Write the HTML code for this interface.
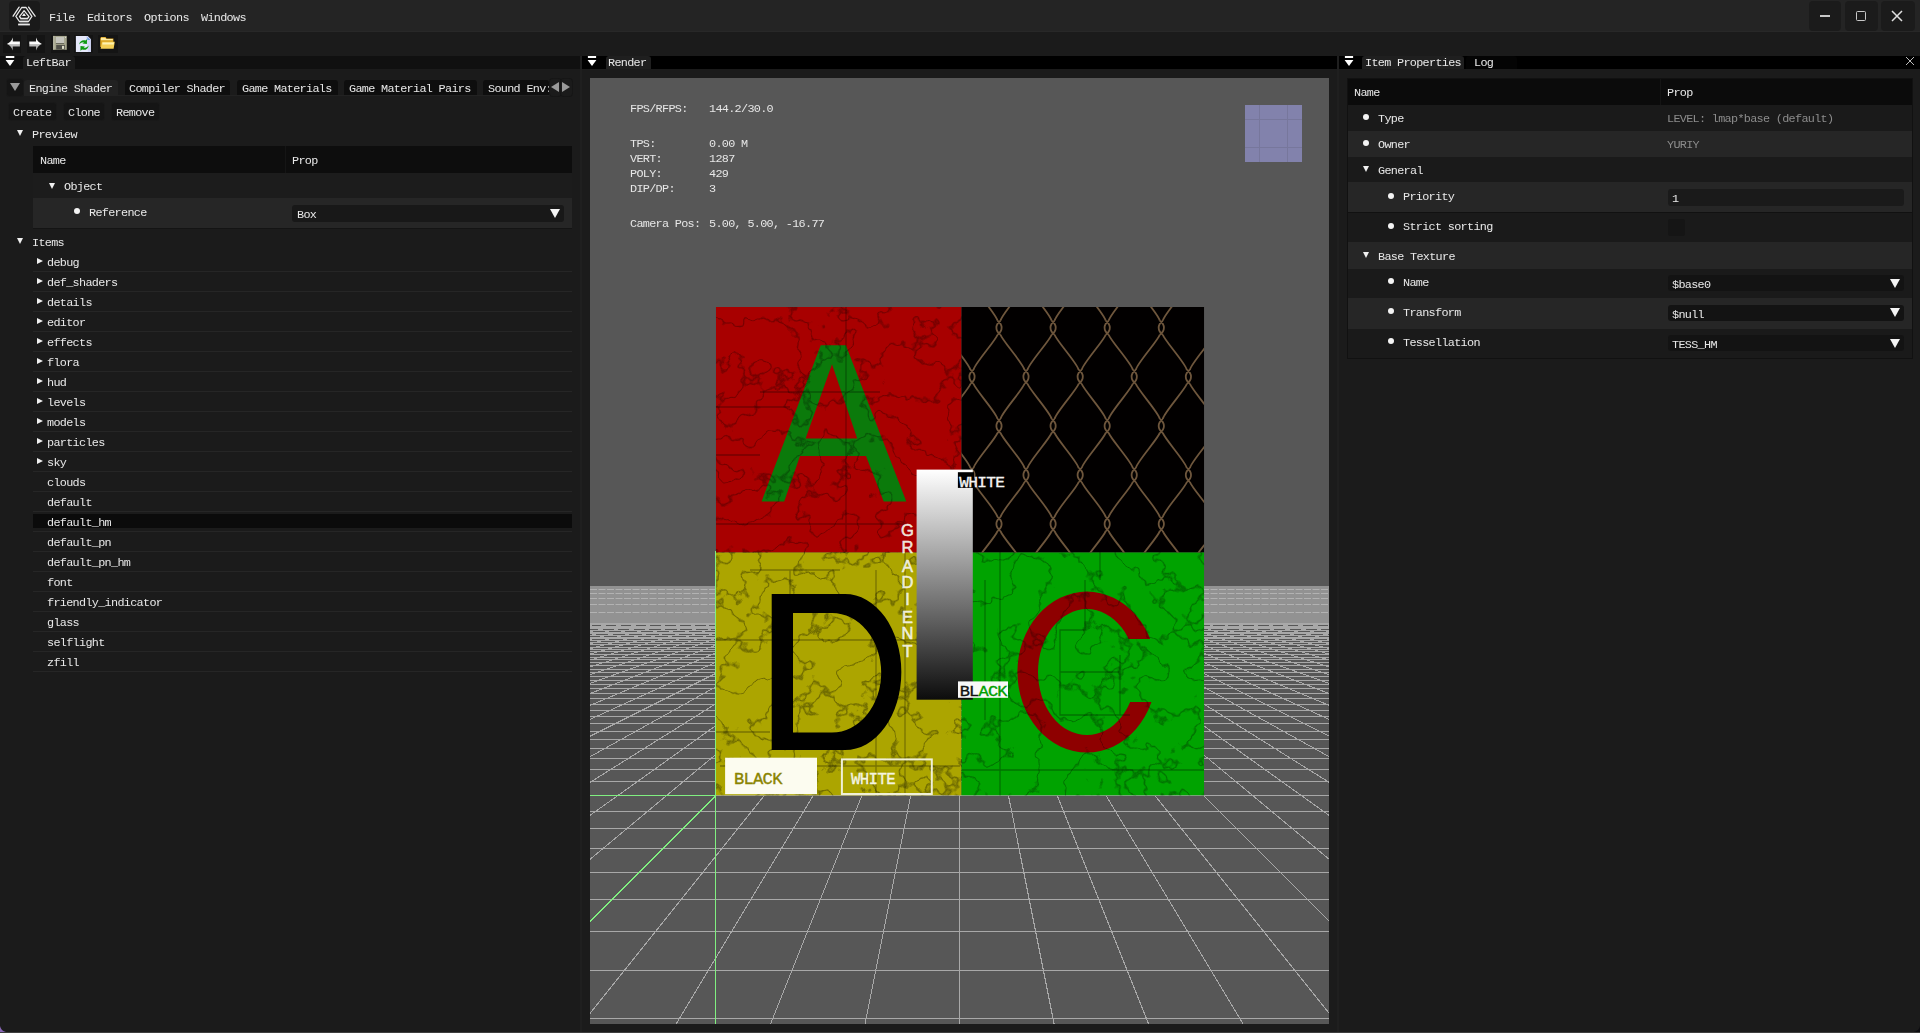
<!DOCTYPE html>
<html><head><meta charset="utf-8">
<style>
*{box-sizing:border-box;margin:0;padding:0}
html,body{width:1920px;height:1033px;overflow:hidden;background:#1b1b1b}
body{position:relative;font-family:"Liberation Mono",monospace;font-size:11.8px;letter-spacing:-0.68px;color:#e8e8e8}
.a{position:absolute}
.t{position:absolute;line-height:14px;white-space:pre;margin-top:1px;will-change:transform}
.sep{position:absolute;left:33px;width:539px;height:1px;background:#262626}
.tri{position:absolute;width:0;height:0;border-left:3.5px solid transparent;border-right:3.5px solid transparent;border-top:6px solid #f0f0f0}
.trir{position:absolute;width:0;height:0;border-top:3.5px solid transparent;border-bottom:3.5px solid transparent;border-left:6px solid #f0f0f0}
.dot{position:absolute;width:6px;height:6px;border-radius:3px;background:#f4f4f4}
.btn{position:absolute;background:#151515;border-radius:3px;box-shadow:0 0 0 1px #191919}
.tab{position:absolute;border-radius:3px 3px 0 0}
</style></head><body>
<!-- ===== title bar ===== -->
<div class="a" style="left:0;top:0;width:1920px;height:31px;background:#242424"></div>
<div class="a" style="left:0;top:31px;width:1920px;height:1px;background:#282828"></div>
<div class="a" style="left:9px;top:1px;width:31px;height:30px;background:#1a1a1a;border-radius:4px"></div>
<svg class="a" style="left:0;top:0" width="50" height="32" viewBox="0 0 50 32">
 <g fill="none" stroke="#e8e8e8" stroke-width="1.3" stroke-linejoin="round" stroke-linecap="round">
  <path d="M13.1,16.2 L19.1,7.1 M28.6,7.1 L35.1,16.2"/>
  <path d="M21.7,7.5 H26.1 L31.9,16.3 L28.5,21.5 H19.4 L15.9,16.3 Z"/>
  <path d="M24.1,10.7 L29,16.6 L27.5,18.5 H20.9 L19.5,16.6 Z"/>
 </g>
 <path d="M20.2,20 H27.8" stroke="#9a9a9a" stroke-width="0.9"/>
 <path d="M20,22.8 H28.2" stroke="#8a8a8a" stroke-width="0.7"/>
 <path d="M24,13 L22,15.9 H26 Z" fill="#f0f0f0"/>
 <rect x="18.1" y="23.6" width="11.8" height="1.8" fill="#e8e8e8"/>
</svg>
<div class="t" style="left:49px;top:10px">File</div>
<div class="t" style="left:87px;top:10px">Editors</div>
<div class="t" style="left:144px;top:10px">Options</div>
<div class="t" style="left:201px;top:10px">Windows</div>
<!-- window buttons -->
<div class="a" style="left:1809px;top:1px;width:32px;height:30px;background:#1b1b1b;border-radius:4px"></div>
<div class="a" style="left:1845px;top:1px;width:33px;height:30px;background:#1b1b1b;border-radius:4px"></div>
<div class="a" style="left:1881px;top:1px;width:34px;height:30px;background:#1b1b1b;border-radius:4px"></div>
<div class="a" style="left:1820px;top:15px;width:10px;height:2px;background:#c8c8c8"></div>
<div class="a" style="left:1856px;top:11px;width:10px;height:10px;border:1.5px solid #c8c8c8;border-radius:1.5px"></div>
<svg class="a" style="left:1891px;top:10px" width="12" height="12" viewBox="0 0 12 12"><path d="M1,1 L11,11 M11,1 L1,11" stroke="#e0e0e0" stroke-width="1.5"/></svg>

<!-- ===== toolbar ===== -->
<div class="a" style="left:0;top:32px;width:1920px;height:24px;background:#1b1b1b"></div>
<div class="a" style="left:3px;top:35px;width:18px;height:18px;background:#141414"></div>
<div class="a" style="left:27px;top:35px;width:18px;height:18px;background:#141414"></div>
<div class="a" style="left:51px;top:35px;width:19px;height:18px;background:#141414"></div>
<div class="a" style="left:74px;top:35px;width:19px;height:18px;background:#141414"></div>
<div class="a" style="left:98px;top:35px;width:20px;height:18px;background:#141414"></div>
<svg class="a" style="left:0;top:32px" width="120" height="24" viewBox="0 0 120 24">
 <defs>
  <linearGradient id="ag" x1="0" y1="0" x2="0" y2="1"><stop offset="0" stop-color="#e8e8e8"/><stop offset="0.5" stop-color="#ffffff"/><stop offset="0.52" stop-color="#c4c4c4"/><stop offset="1" stop-color="#8c8c8c"/></linearGradient>
 </defs>
 <path d="M6.9,12 Q11.2,10.2 12.8,5.6 V9.6 H19.9 V14.6 H12.8 V18.6 Q11.2,13.8 6.9,12 Z" fill="url(#ag)"/>
 <path d="M41.9,12 Q37.6,10.2 36,5.6 V9.6 H29.3 V14.6 H36 V18.6 Q37.6,13.8 41.9,12 Z" fill="url(#ag)"/>
 <!-- floppy -->
 <rect x="53.3" y="3.9" width="13.5" height="13.9" fill="#a4a48c"/>
 <rect x="53.3" y="3.9" width="1" height="13.9" fill="#c8c8b4"/>
 <rect x="55.9" y="4.9" width="8.2" height="6.4" fill="#c4c4bc"/>
 <rect x="55.9" y="11.2" width="8.2" height="0.7" fill="#4c4c44"/>
 <rect x="56.2" y="12.9" width="8.7" height="4.7" fill="#4e4e48"/>
 <rect x="62" y="13.9" width="2.1" height="3" fill="#dedec8"/>
 <rect x="65.2" y="4.8" width="0.9" height="0.9" fill="#fff"/>
 <!-- refresh doc -->
 <path d="M75.9,3.9 H87.6 L90.9,7.3 V19.9 H75.9 Z" fill="#e6e9fb"/>
 <path d="M86,3.9 H87.6 L90.9,7.3 V19.9 H88 Z" fill="#c4ccf4" opacity="0.6"/>
 <path d="M87.3,4.9 V8 H90.5 Z" fill="#6c9ce0"/>
 <path d="M79.2,12.6 C79.4,9.4 82.3,7.6 85.5,8.4 L87,7.3 L86.9,11.9 L82.4,11.6 L83.9,10.4 C82.3,10.1 80.6,11 79.2,12.6 Z" fill="#0e9a12"/>
 <path d="M88.7,13.4 C88.4,16.6 85.4,18.6 82.2,17.6 L80.4,18.7 L80.5,14 L85,14.5 L83.6,15.6 C85.3,16 87.2,15.2 88.7,13.4 Z" fill="#0e9a12"/>
 <!-- folder -->
 <path d="M100.2,6.6 L101,5.1 H105.6 L106.6,6.4 H113.4 V15 H100.2 Z" fill="#d9a21e"/>
 <path d="M101,5.8 H105.3 L106.2,7.1 H112.8 V8.2 H101 Z" fill="#fde9a0"/>
 <path d="M102.2,9.8 H114.8 L113.6,16.8 H100.6 Z" fill="#f5d056"/>
 <path d="M102.6,10.6 H114 L113.7,12.4 H102.3 Z" fill="#fff2b0"/>
</svg>

<!-- ===== dock tab bars ===== -->
<div class="a" style="left:0;top:56px;width:580px;height:13px;background:#101010"></div>
<div class="a" style="left:580px;top:56px;width:2px;height:977px;background:#1f1f1f"></div>
<div class="a" style="left:582px;top:56px;width:755px;height:13px;background:#000"></div>
<div class="a" style="left:1337px;top:56px;width:2px;height:977px;background:#1f1f1f"></div>
<div class="a" style="left:1339px;top:56px;width:581px;height:13px;background:#000"></div>
<!-- dock menu icons -->
<svg class="a" style="left:0;top:55px" width="1920" height="14" viewBox="0 0 1920 14">
 <g fill="#fff">
  <rect x="5.8" y="1" width="8.5" height="2"/><path d="M5.6,5 H14.3 L10,11 Z"/>
  <rect x="587.9" y="1" width="8.2" height="2"/><path d="M587.6,5 H596.4 L592,11 Z"/>
  <rect x="1344.9" y="1" width="8.2" height="2"/><path d="M1344.6,5 H1353.4 L1349,11 Z"/>
 </g>
</svg>
<div class="a" style="left:23px;top:56px;width:52px;height:13px;background:#1c1c1c;border-radius:3px 3px 0 0"></div>
<div class="t" style="left:26px;top:55px">LeftBar</div>
<div class="a" style="left:606px;top:56px;width:45px;height:13px;background:#1f1f1f;border-radius:3px 3px 0 0"></div>
<div class="t" style="left:608px;top:55px">Render</div>
<div class="a" style="left:1362px;top:56px;width:102px;height:13px;background:#1f1f1f;border-radius:3px 3px 0 0"></div>
<div class="t" style="left:1365px;top:55px">Item Properties</div>
<div class="a" style="left:1466px;top:56px;width:51px;height:13px;background:#040404;border-radius:3px 3px 0 0"></div>
<div class="t" style="left:1474px;top:55px">Log</div>
<svg class="a" style="left:1905px;top:56px" width="10" height="10" viewBox="0 0 10 10"><path d="M1,1 L9,9 M9,1 L1,9" stroke="#bbb" stroke-width="1"/></svg>

<!-- LEFT PANEL -->
<div class="btn" style="left:7px;top:79px;width:16px;height:17px"></div>
<div class="a" style="left:10px;top:83px;width:0;height:0;border-left:5px solid transparent;border-right:5px solid transparent;border-top:8px solid #9a9a9a"></div>
<div class="a" style="left:24px;top:95px;width:548px;height:1px;background:#222"></div>
<div class="tab" style="left:24px;top:80px;width:94px;height:15px;background:#222222"></div>
<div class="t" style="left:29.4px;top:81px">Engine Shader</div>
<div class="tab" style="left:125px;top:80px;width:105px;height:15px;background:#0e0e0e"></div>
<div class="t" style="left:129px;top:81px">Compiler Shader</div>
<div class="tab" style="left:237px;top:80px;width:101px;height:15px;background:#0e0e0e"></div>
<div class="t" style="left:242px;top:81px">Game Materials</div>
<div class="tab" style="left:344px;top:80px;width:133px;height:15px;background:#0e0e0e"></div>
<div class="t" style="left:349px;top:81px">Game Material Pairs</div>
<div class="tab" style="left:483px;top:80px;width:66px;height:15px;background:#0e0e0e"></div>
<div class="t" style="left:488px;top:81px;width:62px;overflow:hidden">Sound Env:</div>
<div class="btn" style="left:549.5px;top:79px;width:11px;height:16.5px;background:#1b1b1b;box-shadow:0 0 0 1px #161616"></div>
<div class="btn" style="left:561px;top:79px;width:11px;height:16.5px;background:#1b1b1b;box-shadow:0 0 0 1px #161616"></div>
<div class="a" style="left:551.4px;top:81.8px;width:0;height:0;border-top:5.2px solid transparent;border-bottom:5.2px solid transparent;border-right:8.5px solid #9a9a9a"></div>
<div class="a" style="left:562.3px;top:81.8px;width:0;height:0;border-top:5.2px solid transparent;border-bottom:5.2px solid transparent;border-left:8.5px solid #9a9a9a"></div>
<div class="btn" style="left:9px;top:103px;width:47px;height:17px"></div>
<div class="t" style="left:13px;top:105px">Create</div>
<div class="btn" style="left:64px;top:103px;width:40px;height:17px"></div>
<div class="t" style="left:68px;top:105px">Clone</div>
<div class="btn" style="left:112px;top:103px;width:47px;height:17px"></div>
<div class="t" style="left:116.4px;top:105px">Remove</div>
<div class="tri" style="left:17px;top:130px"></div>
<div class="t" style="left:32px;top:127px">Preview</div>
<div class="a" style="left:33px;top:146px;width:539px;height:82px;background:#1e1e1e"></div>
<div class="a" style="left:33px;top:146px;width:539px;height:27px;background:#0d0d0d"></div>
<div class="a" style="left:285px;top:146px;width:1px;height:27px;background:#151515"></div>
<div class="t" style="left:40px;top:153px">Name</div>
<div class="t" style="left:292px;top:153px">Prop</div>
<div class="a" style="left:33px;top:173px;width:539px;height:25px;background:#1c1c1c"></div>
<div class="tri" style="left:48.5px;top:183px"></div>
<div class="t" style="left:64px;top:179px">Object</div>
<div class="a" style="left:33px;top:198px;width:539px;height:30px;background:#262626"></div>
<div class="a" style="left:33px;top:228px;width:539px;height:1px;background:#141414"></div>
<div class="dot" style="left:74px;top:208px"></div>
<div class="t" style="left:89px;top:205px">Reference</div>
<div class="a" style="left:292px;top:205px;width:272px;height:17px;background:#181818;border-radius:3px"></div>
<div class="t" style="left:297px;top:207px">Box</div>
<div class="a" style="left:549.5px;top:209px;width:0;height:0;border-left:5px solid transparent;border-right:5px solid transparent;border-top:9px solid #f4f4f4"></div>
<div class="tri" style="left:17px;top:238px"></div>
<div class="t" style="left:32px;top:235px">Items</div>
<div class="trir" style="left:37px;top:257.8px"></div>
<div class="t" style="left:47px;top:254.5px">debug</div>
<div class="sep" style="top:271px"></div>
<div class="trir" style="left:37px;top:277.8px"></div>
<div class="t" style="left:47px;top:274.5px">def_shaders</div>
<div class="sep" style="top:291px"></div>
<div class="trir" style="left:37px;top:297.8px"></div>
<div class="t" style="left:47px;top:294.5px">details</div>
<div class="sep" style="top:311px"></div>
<div class="trir" style="left:37px;top:317.8px"></div>
<div class="t" style="left:47px;top:314.5px">editor</div>
<div class="sep" style="top:331px"></div>
<div class="trir" style="left:37px;top:337.8px"></div>
<div class="t" style="left:47px;top:334.5px">effects</div>
<div class="sep" style="top:351px"></div>
<div class="trir" style="left:37px;top:357.8px"></div>
<div class="t" style="left:47px;top:354.5px">flora</div>
<div class="sep" style="top:371px"></div>
<div class="trir" style="left:37px;top:377.8px"></div>
<div class="t" style="left:47px;top:374.5px">hud</div>
<div class="sep" style="top:391px"></div>
<div class="trir" style="left:37px;top:397.8px"></div>
<div class="t" style="left:47px;top:394.5px">levels</div>
<div class="sep" style="top:411px"></div>
<div class="trir" style="left:37px;top:417.8px"></div>
<div class="t" style="left:47px;top:414.5px">models</div>
<div class="sep" style="top:431px"></div>
<div class="trir" style="left:37px;top:437.8px"></div>
<div class="t" style="left:47px;top:434.5px">particles</div>
<div class="sep" style="top:451px"></div>
<div class="trir" style="left:37px;top:457.8px"></div>
<div class="t" style="left:47px;top:454.5px">sky</div>
<div class="sep" style="top:471px"></div>
<div class="t" style="left:47px;top:474.5px">clouds</div>
<div class="sep" style="top:491px"></div>
<div class="t" style="left:47px;top:494.5px">default</div>
<div class="sep" style="top:511px"></div>
<div class="a" style="left:33px;top:514px;width:539px;height:14px;background:#0b0b0b"></div>
<div class="t" style="left:47px;top:514.5px">default_hm</div>
<div class="sep" style="top:531px"></div>
<div class="t" style="left:47px;top:534.5px">default_pn</div>
<div class="sep" style="top:551px"></div>
<div class="t" style="left:47px;top:554.5px">default_pn_hm</div>
<div class="sep" style="top:571px"></div>
<div class="t" style="left:47px;top:574.5px">font</div>
<div class="sep" style="top:591px"></div>
<div class="t" style="left:47px;top:594.5px">friendly_indicator</div>
<div class="sep" style="top:611px"></div>
<div class="t" style="left:47px;top:614.5px">glass</div>
<div class="sep" style="top:631px"></div>
<div class="t" style="left:47px;top:634.5px">selflight</div>
<div class="sep" style="top:651px"></div>
<div class="t" style="left:47px;top:654.5px">zfill</div>
<div class="sep" style="top:671px"></div>
<!-- RENDER PANEL -->
<svg class="a" style="left:590px;top:78px" width="739" height="946" viewBox="590 78 739 946">
<rect x="590" y="78" width="739" height="946" fill="#575757"/>
<rect x="590" y="586" width="739" height="37" fill="#929292"/>
<path d="M590,589.5H1329M590,593.5H1329M590,598.5H1329M590,604.5H1329M590,612.5H1329" stroke="#b2b2b2" stroke-width="1" stroke-dasharray="7 1.5"/>
<path d="M590.0,1018.28H1329.0M590.0,970.49H1329.0M590.0,931.58H1329.0M590.0,899.28H1329.0M590.0,872.03H1329.0M590.0,848.75H1329.0M590.0,828.62H1329.0M590.0,811.04H1329.0M590.0,795.56H1329.0M590.0,781.82H1329.0M590.0,769.54H1329.0M590.0,758.51H1329.0M590.0,748.54H1329.0M590.0,739.48H1329.0M590.0,731.22H1329.0M590.0,723.65H1329.0M590.0,716.70H1329.0M590.0,710.29H1329.0M590.0,704.35H1329.0M590.0,698.84H1329.0M590.0,693.72H1329.0M590.0,688.94H1329.0M590.0,684.47H1329.0M590.0,680.28H1329.0M590.0,676.35H1329.0M590.0,672.65H1329.0M590.0,669.16H1329.0M590.0,665.87H1329.0M590.0,662.75H1329.0M590.0,659.81H1329.0M590.0,657.01H1329.0M590.0,654.35H1329.0M590.0,651.83H1329.0M590.0,649.42H1329.0M590.0,647.13H1329.0M590.0,644.95H1329.0M590.0,642.86H1329.0M590.0,640.86H1329.0M590.0,638.95H1329.0M590.0,637.11H1329.0M590.0,635.36H1329.0M590.0,633.67H1329.0M590.0,632.05H1329.0M590.0,630.49H1329.0M590.0,628.99H1329.0M590.0,627.55H1329.0M590.0,626.16H1329.0M590.0,624.82H1329.0M590.0,623.52H1329.0" stroke="#a8a8a8" stroke-width="1" fill="none" shape-rendering="crispEdges"/>
<path d="M-66744.7,3775.4L-555.01,623.52M-66099.9,3775.4L-540.59,623.52M-65455.1,3775.4L-526.16,623.52M-64810.3,3775.4L-511.74,623.52M-64165.5,3775.4L-497.31,623.52M-63520.7,3775.4L-482.89,623.52M-62875.9,3775.4L-468.46,623.52M-62231.1,3775.4L-454.04,623.52M-61586.3,3775.4L-439.61,623.52M-60941.5,3775.4L-425.19,623.52M-60296.7,3775.4L-410.76,623.52M-59651.9,3775.4L-396.34,623.52M-59007.1,3775.4L-381.91,623.52M-58362.3,3775.4L-367.49,623.52M-57717.5,3775.4L-353.06,623.52M-57072.7,3775.4L-338.64,623.52M-56427.9,3775.4L-324.21,623.52M-55783.1,3775.4L-309.79,623.52M-55138.3,3775.4L-295.36,623.52M-54493.5,3775.4L-280.94,623.52M-53848.7,3775.4L-266.51,623.52M-53203.9,3775.4L-252.09,623.52M-52559.1,3775.4L-237.66,623.52M-51914.3,3775.4L-223.24,623.52M-51269.5,3775.4L-208.81,623.52M-50624.7,3775.4L-194.39,623.52M-49979.8,3775.4L-179.96,623.52M-49335.0,3775.4L-165.54,623.52M-48690.2,3775.4L-151.12,623.52M-48045.4,3775.4L-136.69,623.52M-47400.6,3775.4L-122.27,623.52M-46755.8,3775.4L-107.84,623.52M-46111.0,3775.4L-93.42,623.52M-45466.2,3775.4L-78.99,623.52M-44821.4,3775.4L-64.57,623.52M-44176.6,3775.4L-50.14,623.52M-43531.8,3775.4L-35.72,623.52M-42887.0,3775.4L-21.29,623.52M-42242.2,3775.4L-6.87,623.52M-41597.4,3775.4L7.56,623.52M-40952.6,3775.4L21.98,623.52M-40307.8,3775.4L36.41,623.52M-39663.0,3775.4L50.83,623.52M-39018.2,3775.4L65.26,623.52M-38373.4,3775.4L79.68,623.52M-37728.6,3775.4L94.11,623.52M-37083.8,3775.4L108.53,623.52M-36439.0,3775.4L122.96,623.52M-35794.2,3775.4L137.38,623.52M-35149.4,3775.4L151.81,623.52M-34504.6,3775.4L166.23,623.52M-33859.8,3775.4L180.66,623.52M-33215.0,3775.4L195.08,623.52M-32570.2,3775.4L209.51,623.52M-31925.4,3775.4L223.93,623.52M-31280.6,3775.4L238.36,623.52M-30635.8,3775.4L252.78,623.52M-29991.0,3775.4L267.21,623.52M-29346.1,3775.4L281.63,623.52M-28701.3,3775.4L296.06,623.52M-28056.5,3775.4L310.48,623.52M-27411.7,3775.4L324.91,623.52M-26766.9,3775.4L339.33,623.52M-26122.1,3775.4L353.76,623.52M-25477.3,3775.4L368.18,623.52M-24832.5,3775.4L382.61,623.52M-24187.7,3775.4L397.03,623.52M-23542.9,3775.4L411.45,623.52M-22898.1,3775.4L425.88,623.52M-22253.3,3775.4L440.30,623.52M-21608.5,3775.4L454.73,623.52M-20963.7,3775.4L469.15,623.52M-20318.9,3775.4L483.58,623.52M-19674.1,3775.4L498.00,623.52M-19029.3,3775.4L512.43,623.52M-18384.5,3775.4L526.85,623.52M-17739.7,3775.4L541.28,623.52M-17094.9,3775.4L555.70,623.52M-16450.1,3775.4L570.13,623.52M-15805.3,3775.4L584.55,623.52M-15160.5,3775.4L598.98,623.52M-14515.7,3775.4L613.40,623.52M-13870.9,3775.4L627.83,623.52M-13226.1,3775.4L642.25,623.52M-12581.3,3775.4L656.68,623.52M-11936.5,3775.4L671.10,623.52M-11291.7,3775.4L685.53,623.52M-10646.9,3775.4L699.95,623.52M-10002.1,3775.4L714.38,623.52M-9357.3,3775.4L728.80,623.52M-8712.4,3775.4L743.23,623.52M-8067.6,3775.4L757.65,623.52M-7422.8,3775.4L772.08,623.52M-6778.0,3775.4L786.50,623.52M-6133.2,3775.4L800.93,623.52M-5488.4,3775.4L815.35,623.52M-4843.6,3775.4L829.78,623.52M-4198.8,3775.4L844.20,623.52M-3554.0,3775.4L858.63,623.52M-2909.2,3775.4L873.05,623.52M-2264.4,3775.4L887.48,623.52M-1619.6,3775.4L901.90,623.52M-974.8,3775.4L916.33,623.52M-330.0,3775.4L930.75,623.52M314.8,3775.4L945.18,623.52M959.6,3775.4L959.60,623.52M1604.4,3775.4L974.02,623.52M2249.2,3775.4L988.45,623.52M2894.0,3775.4L1002.87,623.52M3538.8,3775.4L1017.30,623.52M4183.6,3775.4L1031.72,623.52M4828.4,3775.4L1046.15,623.52M5473.2,3775.4L1060.57,623.52M6118.0,3775.4L1075.00,623.52M6762.8,3775.4L1089.42,623.52M7407.6,3775.4L1103.85,623.52M8052.4,3775.4L1118.27,623.52M8697.2,3775.4L1132.70,623.52M9342.0,3775.4L1147.12,623.52M9986.8,3775.4L1161.55,623.52M10631.6,3775.4L1175.97,623.52M11276.5,3775.4L1190.40,623.52M11921.3,3775.4L1204.82,623.52M12566.1,3775.4L1219.25,623.52M13210.9,3775.4L1233.67,623.52M13855.7,3775.4L1248.10,623.52M14500.5,3775.4L1262.52,623.52M15145.3,3775.4L1276.95,623.52M15790.1,3775.4L1291.37,623.52M16434.9,3775.4L1305.80,623.52M17079.7,3775.4L1320.22,623.52M17724.5,3775.4L1334.65,623.52M18369.3,3775.4L1349.07,623.52M19014.1,3775.4L1363.50,623.52M19658.9,3775.4L1377.92,623.52M20303.7,3775.4L1392.35,623.52M20948.5,3775.4L1406.77,623.52M21593.3,3775.4L1421.20,623.52M22238.1,3775.4L1435.62,623.52M22882.9,3775.4L1450.05,623.52M23527.7,3775.4L1464.47,623.52M24172.5,3775.4L1478.90,623.52M24817.3,3775.4L1493.32,623.52M25462.1,3775.4L1507.75,623.52M26106.9,3775.4L1522.17,623.52M26751.7,3775.4L1536.59,623.52M27396.5,3775.4L1551.02,623.52M28041.3,3775.4L1565.44,623.52M28686.1,3775.4L1579.87,623.52M29330.9,3775.4L1594.29,623.52M29975.7,3775.4L1608.72,623.52M30620.5,3775.4L1623.14,623.52M31265.3,3775.4L1637.57,623.52M31910.2,3775.4L1651.99,623.52M32555.0,3775.4L1666.42,623.52M33199.8,3775.4L1680.84,623.52M33844.6,3775.4L1695.27,623.52M34489.4,3775.4L1709.69,623.52M35134.2,3775.4L1724.12,623.52M35779.0,3775.4L1738.54,623.52M36423.8,3775.4L1752.97,623.52M37068.6,3775.4L1767.39,623.52M37713.4,3775.4L1781.82,623.52M38358.2,3775.4L1796.24,623.52M39003.0,3775.4L1810.67,623.52M39647.8,3775.4L1825.09,623.52M40292.6,3775.4L1839.52,623.52M40937.4,3775.4L1853.94,623.52M41582.2,3775.4L1868.37,623.52M42227.0,3775.4L1882.79,623.52M42871.8,3775.4L1897.22,623.52M43516.6,3775.4L1911.64,623.52M44161.4,3775.4L1926.07,623.52M44806.2,3775.4L1940.49,623.52M45451.0,3775.4L1954.92,623.52M46095.8,3775.4L1969.34,623.52M46740.6,3775.4L1983.77,623.52M47385.4,3775.4L1998.19,623.52M48030.2,3775.4L2012.62,623.52M48675.0,3775.4L2027.04,623.52M49319.8,3775.4L2041.47,623.52M49964.6,3775.4L2055.89,623.52M50609.4,3775.4L2070.32,623.52M51254.2,3775.4L2084.74,623.52M51899.0,3775.4L2099.16,623.52M52543.9,3775.4L2113.59,623.52M53188.7,3775.4L2128.01,623.52M53833.5,3775.4L2142.44,623.52M54478.3,3775.4L2156.86,623.52M55123.1,3775.4L2171.29,623.52M55767.9,3775.4L2185.71,623.52M56412.7,3775.4L2200.14,623.52M57057.5,3775.4L2214.56,623.52M57702.3,3775.4L2228.99,623.52M58347.1,3775.4L2243.41,623.52M58991.9,3775.4L2257.84,623.52M59636.7,3775.4L2272.26,623.52M60281.5,3775.4L2286.69,623.52M60926.3,3775.4L2301.11,623.52M61571.1,3775.4L2315.54,623.52M62215.9,3775.4L2329.96,623.52" stroke="#a8a8a8" stroke-width="1" fill="none" shape-rendering="crispEdges"/>
<defs><clipPath id="bc"><rect x="715.9" y="307" width="488.3" height="488.6"/></clipPath><clipPath id="cq"><rect x="961.5" y="307" width="243" height="245.5"/></clipPath><linearGradient id="gr" x1="0" y1="0" x2="0" y2="1"><stop offset="0" stop-color="#ffffff"/><stop offset="1" stop-color="#0c0c0c"/></linearGradient><filter id="t1" filterUnits="userSpaceOnUse" x="715.9" y="307" width="245.60000000000002" height="245.5" color-interpolation-filters="sRGB"><feTurbulence type="fractalNoise" baseFrequency="0.025" numOctaves="4" seed="11"/><feColorMatrix type="matrix" values="0 0 0 0 0  0 0 0 0 0  0 0 0 0 0  1.6 0 0 0 -0.3"/><feComponentTransfer><feFuncA type="table" tableValues="0 0 0 0 0 0 0 0 0 0 0.3 0 0 0 0 0 0 0 0 0"/></feComponentTransfer></filter><filter id="t2" filterUnits="userSpaceOnUse" x="715.9" y="552.5" width="245.60000000000002" height="243.10000000000002" color-interpolation-filters="sRGB"><feTurbulence type="fractalNoise" baseFrequency="0.025" numOctaves="4" seed="5"/><feColorMatrix type="matrix" values="0 0 0 0 0  0 0 0 0 0  0 0 0 0 0  1.6 0 0 0 -0.3"/><feComponentTransfer><feFuncA type="table" tableValues="0 0 0 0 0 0 0 0 0 0 0.35 0 0 0 0 0 0 0 0 0"/></feComponentTransfer></filter><filter id="t3" filterUnits="userSpaceOnUse" x="961.5" y="552.5" width="242.70000000000005" height="243.10000000000002" color-interpolation-filters="sRGB"><feTurbulence type="fractalNoise" baseFrequency="0.025" numOctaves="4" seed="23"/><feColorMatrix type="matrix" values="0 0 0 0 0  0 0 0 0 0  0 0 0 0 0  1.6 0 0 0 -0.3"/><feComponentTransfer><feFuncA type="table" tableValues="0 0 0 0 0 0 0 0 0 0 0.3 0 0 0 0 0 0 0 0 0"/></feComponentTransfer></filter></defs>
<g clip-path="url(#bc)">
<rect x="715.9" y="307" width="245.60000000000002" height="245.5" fill="#a80000"/>
<rect x="961.5" y="307" width="242.70000000000005" height="245.5" fill="#020000"/>
<rect x="715.9" y="552.5" width="245.60000000000002" height="243.10000000000002" fill="#aca500"/>
<rect x="961.5" y="552.5" width="242.70000000000005" height="243.10000000000002" fill="#00a300"/>
<path fill-rule="evenodd" fill="#0b7a0b" d="M761.6,501.4 L820.7,345.3 L845.9,345.3 L906.3,501.4 L883.7,501.4 L866,456 L800,456 L784.2,501.4 Z M805.6,438.4 L832,364.2 L857.2,438.4 Z"/>
<path fill-rule="evenodd" fill="#000" d="M771.7,594 H845 A56.3,78 0 0 1 845,750.1 H771.7 Z M793,613 H832 A49.2,59.75 0 0 1 832,732.5 H793 Z"/>
<clipPath id="cc"><path d="M1000,580 H1170 V639 H1105 V702 H1170 V760 H1000 Z"/></clipPath>
<path clip-path="url(#cc)" fill-rule="evenodd" fill="#8e0000" d="M1017.4,672.1 A69.5,80.5 0 1 0 1156.4,672.1 A69.5,80.5 0 1 0 1017.4,672.1 Z M1038,672.1 A49,63 0 1 0 1136,672.1 A49,63 0 1 0 1038,672.1 Z"/>
<rect x="715.9" y="307" width="245.60000000000002" height="245.5" filter="url(#t1)"/>
<rect x="715.9" y="552.5" width="245.60000000000002" height="243.10000000000002" filter="url(#t2)"/>
<rect x="961.5" y="552.5" width="242.70000000000005" height="243.10000000000002" filter="url(#t3)"/>
<g fill="none" stroke="#000" stroke-opacity="0.3" stroke-width="1.3"><path d="M716,524 H905 M716,407 H790 M846,307 V552 M716,455 H760 M760,392 H880"/><path d="M716,640 H960 M716,732 H770 M876,570 V796 M905,552 V796 M750,570 H840 M720,766 H960 M790,570 V594"/><path d="M1085,580 V630 H1060 V715 H1130 M1060,672 H1120 M1120,655 V715 M1000,552 V796 M985,580 V720 M961,770 H1204 M1100,552 V580"/></g>
<g clip-path="url(#cq)"><path d="M889.3,222.5 C894.8,226.5 894.8,232.5 889.3,236.5M892.3,222.5 C886.8,226.5 886.8,232.5 892.3,236.5M889.3,236.5 C887.3,242.5 866.2,265.6 865.2,271.6M892.3,236.5 C894.3,242.5 915.3,265.6 916.3,271.6M862.2,271.6 C867.8,275.6 867.8,281.6 862.2,285.6M865.2,271.6 C859.8,275.6 859.8,281.6 865.2,285.6M862.2,285.6 C860.2,291.6 839.2,314.7 838.2,320.7M865.2,285.6 C867.2,291.6 888.3,314.7 889.3,320.7M943.4,222.5 C948.9,226.5 948.9,232.5 943.4,236.5M946.4,222.5 C940.9,226.5 940.9,232.5 946.4,236.5M943.4,236.5 C941.4,242.5 920.4,265.6 919.4,271.6M946.4,236.5 C948.4,242.5 969.4,265.6 970.4,271.6M916.4,271.6 C921.9,275.6 921.9,281.6 916.4,285.6M919.4,271.6 C913.9,275.6 913.9,281.6 919.4,285.6M916.4,285.6 C914.4,291.6 893.3,314.7 892.3,320.7M919.4,285.6 C921.4,291.6 942.4,314.7 943.4,320.7M997.5,222.5 C1003.0,226.5 1003.0,232.5 997.5,236.5M1000.5,222.5 C995.0,226.5 995.0,232.5 1000.5,236.5M997.5,236.5 C995.5,242.5 974.5,265.6 973.5,271.6M1000.5,236.5 C1002.5,242.5 1023.5,265.6 1024.5,271.6M970.5,271.6 C976.0,275.6 976.0,281.6 970.5,285.6M973.5,271.6 C968.0,275.6 968.0,281.6 973.5,285.6M970.5,285.6 C968.5,291.6 947.4,314.7 946.4,320.7M973.5,285.6 C975.5,291.6 996.5,314.7 997.5,320.7M1051.6,222.5 C1057.1,226.5 1057.1,232.5 1051.6,236.5M1054.6,222.5 C1049.1,226.5 1049.1,232.5 1054.6,236.5M1051.6,236.5 C1049.6,242.5 1028.5,265.6 1027.5,271.6M1054.6,236.5 C1056.6,242.5 1077.6,265.6 1078.6,271.6M1024.5,271.6 C1030.0,275.6 1030.0,281.6 1024.5,285.6M1027.5,271.6 C1022.0,275.6 1022.0,281.6 1027.5,285.6M1024.5,285.6 C1022.5,291.6 1001.5,314.7 1000.5,320.7M1027.5,285.6 C1029.5,291.6 1050.6,314.7 1051.6,320.7M1105.7,222.5 C1111.2,226.5 1111.2,232.5 1105.7,236.5M1108.7,222.5 C1103.2,226.5 1103.2,232.5 1108.7,236.5M1105.7,236.5 C1103.7,242.5 1082.7,265.6 1081.7,271.6M1108.7,236.5 C1110.7,242.5 1131.8,265.6 1132.8,271.6M1078.7,271.6 C1084.2,275.6 1084.2,281.6 1078.7,285.6M1081.7,271.6 C1076.2,275.6 1076.2,281.6 1081.7,285.6M1078.7,285.6 C1076.7,291.6 1055.6,314.7 1054.6,320.7M1081.7,285.6 C1083.7,291.6 1104.7,314.7 1105.7,320.7M1159.8,222.5 C1165.3,226.5 1165.3,232.5 1159.8,236.5M1162.8,222.5 C1157.3,226.5 1157.3,232.5 1162.8,236.5M1159.8,236.5 C1157.8,242.5 1136.8,265.6 1135.8,271.6M1162.8,236.5 C1164.8,242.5 1185.8,265.6 1186.8,271.6M1132.8,271.6 C1138.2,275.6 1138.2,281.6 1132.8,285.6M1135.8,271.6 C1130.2,275.6 1130.2,281.6 1135.8,285.6M1132.8,285.6 C1130.8,291.6 1109.7,314.7 1108.7,320.7M1135.8,285.6 C1137.8,291.6 1158.8,314.7 1159.8,320.7M1213.9,222.5 C1219.4,226.5 1219.4,232.5 1213.9,236.5M1216.9,222.5 C1211.4,226.5 1211.4,232.5 1216.9,236.5M1213.9,236.5 C1211.9,242.5 1190.9,265.6 1189.9,271.6M1216.9,236.5 C1218.9,242.5 1240.0,265.6 1241.0,271.6M1186.9,271.6 C1192.4,275.6 1192.4,281.6 1186.9,285.6M1189.9,271.6 C1184.4,275.6 1184.4,281.6 1189.9,285.6M1186.9,285.6 C1184.9,291.6 1163.8,314.7 1162.8,320.7M1189.9,285.6 C1191.9,291.6 1212.9,314.7 1213.9,320.7M1268.0,222.5 C1273.5,226.5 1273.5,232.5 1268.0,236.5M1271.0,222.5 C1265.5,226.5 1265.5,232.5 1271.0,236.5M1268.0,236.5 C1266.0,242.5 1245.0,265.6 1244.0,271.6M1271.0,236.5 C1273.0,242.5 1294.0,265.6 1295.0,271.6M1241.0,271.6 C1246.5,275.6 1246.5,281.6 1241.0,285.6M1244.0,271.6 C1238.5,275.6 1238.5,281.6 1244.0,285.6M1241.0,285.6 C1239.0,291.6 1217.9,314.7 1216.9,320.7M1244.0,285.6 C1246.0,291.6 1267.0,314.7 1268.0,320.7M889.3,320.7 C894.8,324.7 894.8,330.7 889.3,334.7M892.3,320.7 C886.8,324.7 886.8,330.7 892.3,334.7M889.3,334.7 C887.3,340.7 866.2,363.8 865.2,369.8M892.3,334.7 C894.3,340.7 915.3,363.8 916.3,369.8M862.2,369.8 C867.8,373.8 867.8,379.8 862.2,383.8M865.2,369.8 C859.8,373.8 859.8,379.8 865.2,383.8M862.2,383.8 C860.2,389.8 839.2,412.9 838.2,418.9M865.2,383.8 C867.2,389.8 888.3,412.9 889.3,418.9M943.4,320.7 C948.9,324.7 948.9,330.7 943.4,334.7M946.4,320.7 C940.9,324.7 940.9,330.7 946.4,334.7M943.4,334.7 C941.4,340.7 920.4,363.8 919.4,369.8M946.4,334.7 C948.4,340.7 969.4,363.8 970.4,369.8M916.4,369.8 C921.9,373.8 921.9,379.8 916.4,383.8M919.4,369.8 C913.9,373.8 913.9,379.8 919.4,383.8M916.4,383.8 C914.4,389.8 893.3,412.9 892.3,418.9M919.4,383.8 C921.4,389.8 942.4,412.9 943.4,418.9M997.5,320.7 C1003.0,324.7 1003.0,330.7 997.5,334.7M1000.5,320.7 C995.0,324.7 995.0,330.7 1000.5,334.7M997.5,334.7 C995.5,340.7 974.5,363.8 973.5,369.8M1000.5,334.7 C1002.5,340.7 1023.5,363.8 1024.5,369.8M970.5,369.8 C976.0,373.8 976.0,379.8 970.5,383.8M973.5,369.8 C968.0,373.8 968.0,379.8 973.5,383.8M970.5,383.8 C968.5,389.8 947.4,412.9 946.4,418.9M973.5,383.8 C975.5,389.8 996.5,412.9 997.5,418.9M1051.6,320.7 C1057.1,324.7 1057.1,330.7 1051.6,334.7M1054.6,320.7 C1049.1,324.7 1049.1,330.7 1054.6,334.7M1051.6,334.7 C1049.6,340.7 1028.5,363.8 1027.5,369.8M1054.6,334.7 C1056.6,340.7 1077.6,363.8 1078.6,369.8M1024.5,369.8 C1030.0,373.8 1030.0,379.8 1024.5,383.8M1027.5,369.8 C1022.0,373.8 1022.0,379.8 1027.5,383.8M1024.5,383.8 C1022.5,389.8 1001.5,412.9 1000.5,418.9M1027.5,383.8 C1029.5,389.8 1050.6,412.9 1051.6,418.9M1105.7,320.7 C1111.2,324.7 1111.2,330.7 1105.7,334.7M1108.7,320.7 C1103.2,324.7 1103.2,330.7 1108.7,334.7M1105.7,334.7 C1103.7,340.7 1082.7,363.8 1081.7,369.8M1108.7,334.7 C1110.7,340.7 1131.8,363.8 1132.8,369.8M1078.7,369.8 C1084.2,373.8 1084.2,379.8 1078.7,383.8M1081.7,369.8 C1076.2,373.8 1076.2,379.8 1081.7,383.8M1078.7,383.8 C1076.7,389.8 1055.6,412.9 1054.6,418.9M1081.7,383.8 C1083.7,389.8 1104.7,412.9 1105.7,418.9M1159.8,320.7 C1165.3,324.7 1165.3,330.7 1159.8,334.7M1162.8,320.7 C1157.3,324.7 1157.3,330.7 1162.8,334.7M1159.8,334.7 C1157.8,340.7 1136.8,363.8 1135.8,369.8M1162.8,334.7 C1164.8,340.7 1185.8,363.8 1186.8,369.8M1132.8,369.8 C1138.2,373.8 1138.2,379.8 1132.8,383.8M1135.8,369.8 C1130.2,373.8 1130.2,379.8 1135.8,383.8M1132.8,383.8 C1130.8,389.8 1109.7,412.9 1108.7,418.9M1135.8,383.8 C1137.8,389.8 1158.8,412.9 1159.8,418.9M1213.9,320.7 C1219.4,324.7 1219.4,330.7 1213.9,334.7M1216.9,320.7 C1211.4,324.7 1211.4,330.7 1216.9,334.7M1213.9,334.7 C1211.9,340.7 1190.9,363.8 1189.9,369.8M1216.9,334.7 C1218.9,340.7 1240.0,363.8 1241.0,369.8M1186.9,369.8 C1192.4,373.8 1192.4,379.8 1186.9,383.8M1189.9,369.8 C1184.4,373.8 1184.4,379.8 1189.9,383.8M1186.9,383.8 C1184.9,389.8 1163.8,412.9 1162.8,418.9M1189.9,383.8 C1191.9,389.8 1212.9,412.9 1213.9,418.9M1268.0,320.7 C1273.5,324.7 1273.5,330.7 1268.0,334.7M1271.0,320.7 C1265.5,324.7 1265.5,330.7 1271.0,334.7M1268.0,334.7 C1266.0,340.7 1245.0,363.8 1244.0,369.8M1271.0,334.7 C1273.0,340.7 1294.0,363.8 1295.0,369.8M1241.0,369.8 C1246.5,373.8 1246.5,379.8 1241.0,383.8M1244.0,369.8 C1238.5,373.8 1238.5,379.8 1244.0,383.8M1241.0,383.8 C1239.0,389.8 1217.9,412.9 1216.9,418.9M1244.0,383.8 C1246.0,389.8 1267.0,412.9 1268.0,418.9M889.3,418.9 C894.8,422.9 894.8,428.9 889.3,432.9M892.3,418.9 C886.8,422.9 886.8,428.9 892.3,432.9M889.3,432.9 C887.3,438.9 866.2,462.0 865.2,468.0M892.3,432.9 C894.3,438.9 915.3,462.0 916.3,468.0M862.2,468.0 C867.8,472.0 867.8,478.0 862.2,482.0M865.2,468.0 C859.8,472.0 859.8,478.0 865.2,482.0M862.2,482.0 C860.2,488.0 839.2,511.1 838.2,517.1M865.2,482.0 C867.2,488.0 888.3,511.1 889.3,517.1M943.4,418.9 C948.9,422.9 948.9,428.9 943.4,432.9M946.4,418.9 C940.9,422.9 940.9,428.9 946.4,432.9M943.4,432.9 C941.4,438.9 920.4,462.0 919.4,468.0M946.4,432.9 C948.4,438.9 969.4,462.0 970.4,468.0M916.4,468.0 C921.9,472.0 921.9,478.0 916.4,482.0M919.4,468.0 C913.9,472.0 913.9,478.0 919.4,482.0M916.4,482.0 C914.4,488.0 893.3,511.1 892.3,517.1M919.4,482.0 C921.4,488.0 942.4,511.1 943.4,517.1M997.5,418.9 C1003.0,422.9 1003.0,428.9 997.5,432.9M1000.5,418.9 C995.0,422.9 995.0,428.9 1000.5,432.9M997.5,432.9 C995.5,438.9 974.5,462.0 973.5,468.0M1000.5,432.9 C1002.5,438.9 1023.5,462.0 1024.5,468.0M970.5,468.0 C976.0,472.0 976.0,478.0 970.5,482.0M973.5,468.0 C968.0,472.0 968.0,478.0 973.5,482.0M970.5,482.0 C968.5,488.0 947.4,511.1 946.4,517.1M973.5,482.0 C975.5,488.0 996.5,511.1 997.5,517.1M1051.6,418.9 C1057.1,422.9 1057.1,428.9 1051.6,432.9M1054.6,418.9 C1049.1,422.9 1049.1,428.9 1054.6,432.9M1051.6,432.9 C1049.6,438.9 1028.5,462.0 1027.5,468.0M1054.6,432.9 C1056.6,438.9 1077.6,462.0 1078.6,468.0M1024.5,468.0 C1030.0,472.0 1030.0,478.0 1024.5,482.0M1027.5,468.0 C1022.0,472.0 1022.0,478.0 1027.5,482.0M1024.5,482.0 C1022.5,488.0 1001.5,511.1 1000.5,517.1M1027.5,482.0 C1029.5,488.0 1050.6,511.1 1051.6,517.1M1105.7,418.9 C1111.2,422.9 1111.2,428.9 1105.7,432.9M1108.7,418.9 C1103.2,422.9 1103.2,428.9 1108.7,432.9M1105.7,432.9 C1103.7,438.9 1082.7,462.0 1081.7,468.0M1108.7,432.9 C1110.7,438.9 1131.8,462.0 1132.8,468.0M1078.7,468.0 C1084.2,472.0 1084.2,478.0 1078.7,482.0M1081.7,468.0 C1076.2,472.0 1076.2,478.0 1081.7,482.0M1078.7,482.0 C1076.7,488.0 1055.6,511.1 1054.6,517.1M1081.7,482.0 C1083.7,488.0 1104.7,511.1 1105.7,517.1M1159.8,418.9 C1165.3,422.9 1165.3,428.9 1159.8,432.9M1162.8,418.9 C1157.3,422.9 1157.3,428.9 1162.8,432.9M1159.8,432.9 C1157.8,438.9 1136.8,462.0 1135.8,468.0M1162.8,432.9 C1164.8,438.9 1185.8,462.0 1186.8,468.0M1132.8,468.0 C1138.2,472.0 1138.2,478.0 1132.8,482.0M1135.8,468.0 C1130.2,472.0 1130.2,478.0 1135.8,482.0M1132.8,482.0 C1130.8,488.0 1109.7,511.1 1108.7,517.1M1135.8,482.0 C1137.8,488.0 1158.8,511.1 1159.8,517.1M1213.9,418.9 C1219.4,422.9 1219.4,428.9 1213.9,432.9M1216.9,418.9 C1211.4,422.9 1211.4,428.9 1216.9,432.9M1213.9,432.9 C1211.9,438.9 1190.9,462.0 1189.9,468.0M1216.9,432.9 C1218.9,438.9 1240.0,462.0 1241.0,468.0M1186.9,468.0 C1192.4,472.0 1192.4,478.0 1186.9,482.0M1189.9,468.0 C1184.4,472.0 1184.4,478.0 1189.9,482.0M1186.9,482.0 C1184.9,488.0 1163.8,511.1 1162.8,517.1M1189.9,482.0 C1191.9,488.0 1212.9,511.1 1213.9,517.1M1268.0,418.9 C1273.5,422.9 1273.5,428.9 1268.0,432.9M1271.0,418.9 C1265.5,422.9 1265.5,428.9 1271.0,432.9M1268.0,432.9 C1266.0,438.9 1245.0,462.0 1244.0,468.0M1271.0,432.9 C1273.0,438.9 1294.0,462.0 1295.0,468.0M1241.0,468.0 C1246.5,472.0 1246.5,478.0 1241.0,482.0M1244.0,468.0 C1238.5,472.0 1238.5,478.0 1244.0,482.0M1241.0,482.0 C1239.0,488.0 1217.9,511.1 1216.9,517.1M1244.0,482.0 C1246.0,488.0 1267.0,511.1 1268.0,517.1M889.3,517.1 C894.8,521.1 894.8,527.1 889.3,531.1M892.3,517.1 C886.8,521.1 886.8,527.1 892.3,531.1M889.3,531.1 C887.3,537.1 866.2,560.2 865.2,566.2M892.3,531.1 C894.3,537.1 915.3,560.2 916.3,566.2M862.2,566.2 C867.8,570.2 867.8,576.2 862.2,580.2M865.2,566.2 C859.8,570.2 859.8,576.2 865.2,580.2M862.2,580.2 C860.2,586.2 839.2,609.3 838.2,615.3M865.2,580.2 C867.2,586.2 888.3,609.3 889.3,615.3M943.4,517.1 C948.9,521.1 948.9,527.1 943.4,531.1M946.4,517.1 C940.9,521.1 940.9,527.1 946.4,531.1M943.4,531.1 C941.4,537.1 920.4,560.2 919.4,566.2M946.4,531.1 C948.4,537.1 969.4,560.2 970.4,566.2M916.4,566.2 C921.9,570.2 921.9,576.2 916.4,580.2M919.4,566.2 C913.9,570.2 913.9,576.2 919.4,580.2M916.4,580.2 C914.4,586.2 893.3,609.3 892.3,615.3M919.4,580.2 C921.4,586.2 942.4,609.3 943.4,615.3M997.5,517.1 C1003.0,521.1 1003.0,527.1 997.5,531.1M1000.5,517.1 C995.0,521.1 995.0,527.1 1000.5,531.1M997.5,531.1 C995.5,537.1 974.5,560.2 973.5,566.2M1000.5,531.1 C1002.5,537.1 1023.5,560.2 1024.5,566.2M970.5,566.2 C976.0,570.2 976.0,576.2 970.5,580.2M973.5,566.2 C968.0,570.2 968.0,576.2 973.5,580.2M970.5,580.2 C968.5,586.2 947.4,609.3 946.4,615.3M973.5,580.2 C975.5,586.2 996.5,609.3 997.5,615.3M1051.6,517.1 C1057.1,521.1 1057.1,527.1 1051.6,531.1M1054.6,517.1 C1049.1,521.1 1049.1,527.1 1054.6,531.1M1051.6,531.1 C1049.6,537.1 1028.5,560.2 1027.5,566.2M1054.6,531.1 C1056.6,537.1 1077.6,560.2 1078.6,566.2M1024.5,566.2 C1030.0,570.2 1030.0,576.2 1024.5,580.2M1027.5,566.2 C1022.0,570.2 1022.0,576.2 1027.5,580.2M1024.5,580.2 C1022.5,586.2 1001.5,609.3 1000.5,615.3M1027.5,580.2 C1029.5,586.2 1050.6,609.3 1051.6,615.3M1105.7,517.1 C1111.2,521.1 1111.2,527.1 1105.7,531.1M1108.7,517.1 C1103.2,521.1 1103.2,527.1 1108.7,531.1M1105.7,531.1 C1103.7,537.1 1082.7,560.2 1081.7,566.2M1108.7,531.1 C1110.7,537.1 1131.8,560.2 1132.8,566.2M1078.7,566.2 C1084.2,570.2 1084.2,576.2 1078.7,580.2M1081.7,566.2 C1076.2,570.2 1076.2,576.2 1081.7,580.2M1078.7,580.2 C1076.7,586.2 1055.6,609.3 1054.6,615.3M1081.7,580.2 C1083.7,586.2 1104.7,609.3 1105.7,615.3M1159.8,517.1 C1165.3,521.1 1165.3,527.1 1159.8,531.1M1162.8,517.1 C1157.3,521.1 1157.3,527.1 1162.8,531.1M1159.8,531.1 C1157.8,537.1 1136.8,560.2 1135.8,566.2M1162.8,531.1 C1164.8,537.1 1185.8,560.2 1186.8,566.2M1132.8,566.2 C1138.2,570.2 1138.2,576.2 1132.8,580.2M1135.8,566.2 C1130.2,570.2 1130.2,576.2 1135.8,580.2M1132.8,580.2 C1130.8,586.2 1109.7,609.3 1108.7,615.3M1135.8,580.2 C1137.8,586.2 1158.8,609.3 1159.8,615.3M1213.9,517.1 C1219.4,521.1 1219.4,527.1 1213.9,531.1M1216.9,517.1 C1211.4,521.1 1211.4,527.1 1216.9,531.1M1213.9,531.1 C1211.9,537.1 1190.9,560.2 1189.9,566.2M1216.9,531.1 C1218.9,537.1 1240.0,560.2 1241.0,566.2M1186.9,566.2 C1192.4,570.2 1192.4,576.2 1186.9,580.2M1189.9,566.2 C1184.4,570.2 1184.4,576.2 1189.9,580.2M1186.9,580.2 C1184.9,586.2 1163.8,609.3 1162.8,615.3M1189.9,580.2 C1191.9,586.2 1212.9,609.3 1213.9,615.3M1268.0,517.1 C1273.5,521.1 1273.5,527.1 1268.0,531.1M1271.0,517.1 C1265.5,521.1 1265.5,527.1 1271.0,531.1M1268.0,531.1 C1266.0,537.1 1245.0,560.2 1244.0,566.2M1271.0,531.1 C1273.0,537.1 1294.0,560.2 1295.0,566.2M1241.0,566.2 C1246.5,570.2 1246.5,576.2 1241.0,580.2M1244.0,566.2 C1238.5,570.2 1238.5,576.2 1244.0,580.2M1241.0,580.2 C1239.0,586.2 1217.9,609.3 1216.9,615.3M1244.0,580.2 C1246.0,586.2 1267.0,609.3 1268.0,615.3M889.3,615.3 C894.8,619.3 894.8,625.3 889.3,629.3M892.3,615.3 C886.8,619.3 886.8,625.3 892.3,629.3M889.3,629.3 C887.3,635.3 866.2,658.4 865.2,664.4M892.3,629.3 C894.3,635.3 915.3,658.4 916.3,664.4M862.2,664.4 C867.8,668.4 867.8,674.4 862.2,678.4M865.2,664.4 C859.8,668.4 859.8,674.4 865.2,678.4M862.2,678.4 C860.2,684.4 839.2,707.5 838.2,713.5M865.2,678.4 C867.2,684.4 888.3,707.5 889.3,713.5M943.4,615.3 C948.9,619.3 948.9,625.3 943.4,629.3M946.4,615.3 C940.9,619.3 940.9,625.3 946.4,629.3M943.4,629.3 C941.4,635.3 920.4,658.4 919.4,664.4M946.4,629.3 C948.4,635.3 969.4,658.4 970.4,664.4M916.4,664.4 C921.9,668.4 921.9,674.4 916.4,678.4M919.4,664.4 C913.9,668.4 913.9,674.4 919.4,678.4M916.4,678.4 C914.4,684.4 893.3,707.5 892.3,713.5M919.4,678.4 C921.4,684.4 942.4,707.5 943.4,713.5M997.5,615.3 C1003.0,619.3 1003.0,625.3 997.5,629.3M1000.5,615.3 C995.0,619.3 995.0,625.3 1000.5,629.3M997.5,629.3 C995.5,635.3 974.5,658.4 973.5,664.4M1000.5,629.3 C1002.5,635.3 1023.5,658.4 1024.5,664.4M970.5,664.4 C976.0,668.4 976.0,674.4 970.5,678.4M973.5,664.4 C968.0,668.4 968.0,674.4 973.5,678.4M970.5,678.4 C968.5,684.4 947.4,707.5 946.4,713.5M973.5,678.4 C975.5,684.4 996.5,707.5 997.5,713.5M1051.6,615.3 C1057.1,619.3 1057.1,625.3 1051.6,629.3M1054.6,615.3 C1049.1,619.3 1049.1,625.3 1054.6,629.3M1051.6,629.3 C1049.6,635.3 1028.5,658.4 1027.5,664.4M1054.6,629.3 C1056.6,635.3 1077.6,658.4 1078.6,664.4M1024.5,664.4 C1030.0,668.4 1030.0,674.4 1024.5,678.4M1027.5,664.4 C1022.0,668.4 1022.0,674.4 1027.5,678.4M1024.5,678.4 C1022.5,684.4 1001.5,707.5 1000.5,713.5M1027.5,678.4 C1029.5,684.4 1050.6,707.5 1051.6,713.5M1105.7,615.3 C1111.2,619.3 1111.2,625.3 1105.7,629.3M1108.7,615.3 C1103.2,619.3 1103.2,625.3 1108.7,629.3M1105.7,629.3 C1103.7,635.3 1082.7,658.4 1081.7,664.4M1108.7,629.3 C1110.7,635.3 1131.8,658.4 1132.8,664.4M1078.7,664.4 C1084.2,668.4 1084.2,674.4 1078.7,678.4M1081.7,664.4 C1076.2,668.4 1076.2,674.4 1081.7,678.4M1078.7,678.4 C1076.7,684.4 1055.6,707.5 1054.6,713.5M1081.7,678.4 C1083.7,684.4 1104.7,707.5 1105.7,713.5M1159.8,615.3 C1165.3,619.3 1165.3,625.3 1159.8,629.3M1162.8,615.3 C1157.3,619.3 1157.3,625.3 1162.8,629.3M1159.8,629.3 C1157.8,635.3 1136.8,658.4 1135.8,664.4M1162.8,629.3 C1164.8,635.3 1185.8,658.4 1186.8,664.4M1132.8,664.4 C1138.2,668.4 1138.2,674.4 1132.8,678.4M1135.8,664.4 C1130.2,668.4 1130.2,674.4 1135.8,678.4M1132.8,678.4 C1130.8,684.4 1109.7,707.5 1108.7,713.5M1135.8,678.4 C1137.8,684.4 1158.8,707.5 1159.8,713.5M1213.9,615.3 C1219.4,619.3 1219.4,625.3 1213.9,629.3M1216.9,615.3 C1211.4,619.3 1211.4,625.3 1216.9,629.3M1213.9,629.3 C1211.9,635.3 1190.9,658.4 1189.9,664.4M1216.9,629.3 C1218.9,635.3 1240.0,658.4 1241.0,664.4M1186.9,664.4 C1192.4,668.4 1192.4,674.4 1186.9,678.4M1189.9,664.4 C1184.4,668.4 1184.4,674.4 1189.9,678.4M1186.9,678.4 C1184.9,684.4 1163.8,707.5 1162.8,713.5M1189.9,678.4 C1191.9,684.4 1212.9,707.5 1213.9,713.5M1268.0,615.3 C1273.5,619.3 1273.5,625.3 1268.0,629.3M1271.0,615.3 C1265.5,619.3 1265.5,625.3 1271.0,629.3M1268.0,629.3 C1266.0,635.3 1245.0,658.4 1244.0,664.4M1271.0,629.3 C1273.0,635.3 1294.0,658.4 1295.0,664.4M1241.0,664.4 C1246.5,668.4 1246.5,674.4 1241.0,678.4M1244.0,664.4 C1238.5,668.4 1238.5,674.4 1244.0,678.4M1241.0,678.4 C1239.0,684.4 1217.9,707.5 1216.9,713.5M1244.0,678.4 C1246.0,684.4 1267.0,707.5 1268.0,713.5" stroke="#6e563c" stroke-width="1.8" fill="none"/></g>
<rect x="916.6" y="469.6" width="56.2" height="230.1" fill="url(#gr)"/>
<rect x="957.9" y="472.2" width="16.1" height="15.7" fill="#000"/>
<text x="959.3" y="486.6" font-family="Liberation Mono" stroke-width="0.35" font-size="15" fill="#f4f4f4" stroke="#f4f4f4" textLength="45" lengthAdjust="spacingAndGlyphs">WHITE</text>
<rect x="958" y="681.4" width="50" height="16.4" fill="#f8f8f8"/>
<text x="959.7" y="695.7" font-family="Liberation Mono" stroke-width="0.35" font-size="15" fill="#111" stroke="#111" textLength="47" lengthAdjust="spacingAndGlyphs">BL<tspan fill="#00a000" stroke="#00a000">ACK</tspan></text>
<text x="907.2" y="535.5" text-anchor="middle" font-family="Liberation Sans" font-size="16.5" fill="#f4f4e8" stroke="#f4f4e8" stroke-width="0.5" fill-opacity="0.92">G</text>
<text x="907.2" y="552.5" text-anchor="middle" font-family="Liberation Sans" font-size="16.5" fill="#f4f4e8" stroke="#f4f4e8" stroke-width="0.5" fill-opacity="0.92">R</text>
<text x="907.2" y="572.1" text-anchor="middle" font-family="Liberation Sans" font-size="16.5" fill="#f4f4e8" stroke="#f4f4e8" stroke-width="0.5" fill-opacity="0.92">A</text>
<text x="907.2" y="587.8" text-anchor="middle" font-family="Liberation Sans" font-size="16.5" fill="#f4f4e8" stroke="#f4f4e8" stroke-width="0.5" fill-opacity="0.92">D</text>
<text x="907.2" y="604.7" text-anchor="middle" font-family="Liberation Sans" font-size="16.5" fill="#f4f4e8" stroke="#f4f4e8" stroke-width="0.5" fill-opacity="0.92">I</text>
<text x="907.2" y="623.0" text-anchor="middle" font-family="Liberation Sans" font-size="16.5" fill="#f4f4e8" stroke="#f4f4e8" stroke-width="0.5" fill-opacity="0.92">E</text>
<text x="907.2" y="638.7" text-anchor="middle" font-family="Liberation Sans" font-size="16.5" fill="#f4f4e8" stroke="#f4f4e8" stroke-width="0.5" fill-opacity="0.92">N</text>
<text x="907.2" y="657.0" text-anchor="middle" font-family="Liberation Sans" font-size="16.5" fill="#f4f4e8" stroke="#f4f4e8" stroke-width="0.5" fill-opacity="0.92">T</text>
<rect x="725.1" y="757.7" width="91.9" height="36.5" fill="#fcfcf0"/>
<text x="734" y="784" font-family="Liberation Mono" stroke-width="0.35" font-size="16" fill="#8a8400" stroke="#8a8400" textLength="47.7" lengthAdjust="spacingAndGlyphs">BLACK</text>
<rect x="841.9" y="759.4" width="89.9" height="34.6" fill="none" stroke="#f0f0d8" stroke-width="2"/>
<text x="851" y="784" font-family="Liberation Mono" stroke-width="0.35" font-size="16" fill="#f4f4e0" stroke="#f4f4e0" textLength="44" lengthAdjust="spacingAndGlyphs">WHITE</text>
</g>
<path d="M715.5,551 V1024 M590,795.5 H716 M715.9,795.6 L590,921.5" stroke="#80f080" stroke-width="1" fill="none" shape-rendering="crispEdges"/>
</svg>
<div class="t" style="left:630px;top:101px;color:#e6e6e6">FPS/RFPS:</div>
<div class="t" style="left:709px;top:101px;color:#e6e6e6">144.2/30.0</div>
<div class="t" style="left:630px;top:136px;color:#e6e6e6">TPS:</div>
<div class="t" style="left:709px;top:136px;color:#e6e6e6">0.00 M</div>
<div class="t" style="left:630px;top:151px;color:#e6e6e6">VERT:</div>
<div class="t" style="left:709px;top:151px;color:#e6e6e6">1287</div>
<div class="t" style="left:630px;top:166px;color:#e6e6e6">POLY:</div>
<div class="t" style="left:709px;top:166px;color:#e6e6e6">429</div>
<div class="t" style="left:630px;top:181px;color:#e6e6e6">DIP/DP:</div>
<div class="t" style="left:709px;top:181px;color:#e6e6e6">3</div>
<div class="t" style="left:630px;top:216px;color:#e6e6e6">Camera Pos:</div>
<div class="t" style="left:709px;top:216px;color:#e6e6e6">5.00, 5.00, -16.77</div>
<svg class="a" style="left:1245px;top:105px" width="57" height="57"><rect width="57" height="57" fill="#8282ac"/><path d="M14.5,0 V57 M42.5,0 V57 M0,14.5 H57 M0,42.5 H57" stroke="#77779c" stroke-width="1"/></svg>
<!-- RIGHT PANEL -->
<div class="a" style="left:1347px;top:78px;width:566px;height:281px;background:#111;"></div>
<div class="a" style="left:1348px;top:79px;width:564px;height:26px;background:#0b0b0b"></div>
<div class="a" style="left:1660px;top:79px;width:1px;height:26px;background:#141414"></div>
<div class="t" style="left:1354px;top:85px">Name</div>
<div class="t" style="left:1667px;top:85px">Prop</div>
<div class="a" style="left:1348px;top:105px;width:564px;height:25.5px;background:#1a1a1a"></div>
<div class="a" style="left:1348px;top:130.5px;width:564px;height:26.0px;background:#262626"></div>
<div class="a" style="left:1348px;top:156.5px;width:564px;height:25.69999999999999px;background:#1a1a1a"></div>
<div class="a" style="left:1348px;top:182.2px;width:564px;height:30.30000000000001px;background:#262626"></div>
<div class="a" style="left:1348px;top:212.5px;width:564px;height:29.5px;background:#1a1a1a"></div>
<div class="a" style="left:1348px;top:242px;width:564px;height:27px;background:#262626"></div>
<div class="a" style="left:1348px;top:269px;width:564px;height:29px;background:#1a1a1a"></div>
<div class="a" style="left:1348px;top:298px;width:564px;height:31px;background:#262626"></div>
<div class="a" style="left:1348px;top:329px;width:564px;height:29px;background:#1a1a1a"></div>
<div class="dot" style="left:1363px;top:114.3px"></div>
<div class="t" style="left:1378px;top:111.3px">Type</div>
<div class="t" style="left:1667px;top:111.3px;color:#8c8c8c">LEVEL: lmap*base (default)</div>
<div class="dot" style="left:1363px;top:140.3px"></div>
<div class="t" style="left:1378px;top:137.2px">Owner</div>
<div class="t" style="left:1667px;top:137.2px;color:#8c8c8c">YURIY</div>
<div class="tri" style="left:1362.5px;top:166.3px"></div>
<div class="t" style="left:1378px;top:163px">General</div>
<div class="dot" style="left:1388px;top:192.5px"></div>
<div class="t" style="left:1403px;top:189.2px">Priority</div>
<div class="a" style="left:1668px;top:189px;width:236px;height:16.5px;background:#1a1a1a;border-radius:3px"></div>
<div class="t" style="left:1672px;top:191px">1</div>
<div class="dot" style="left:1388px;top:222.5px"></div>
<div class="t" style="left:1403px;top:219.3px">Strict sorting</div>
<div class="a" style="left:1668px;top:219px;width:17px;height:17px;background:#151515;border-radius:2px"></div>
<div class="tri" style="left:1362.5px;top:252.3px"></div>
<div class="t" style="left:1378px;top:249.3px">Base Texture</div>
<div class="dot" style="left:1388px;top:278.4px"></div>
<div class="t" style="left:1403px;top:275.2px">Name</div>
<div class="a" style="left:1668px;top:275.0px;width:236px;height:16px;background:#131313;border-radius:3px"></div>
<div class="t" style="left:1672px;top:277.0px">$base0</div>
<div class="a" style="left:1889.5px;top:278.5px;width:0;height:0;border-left:5px solid transparent;border-right:5px solid transparent;border-top:9px solid #f4f4f4"></div>
<div class="dot" style="left:1388px;top:308.4px"></div>
<div class="t" style="left:1403px;top:305.2px">Transform</div>
<div class="a" style="left:1668px;top:304.5px;width:236px;height:16px;background:#131313;border-radius:3px"></div>
<div class="t" style="left:1672px;top:307.0px">$null</div>
<div class="a" style="left:1889.5px;top:308px;width:0;height:0;border-left:5px solid transparent;border-right:5px solid transparent;border-top:9px solid #f4f4f4"></div>
<div class="dot" style="left:1388px;top:338.4px"></div>
<div class="t" style="left:1403px;top:335.2px">Tessellation</div>
<div class="a" style="left:1668px;top:335.0px;width:236px;height:16px;background:#131313;border-radius:3px"></div>
<div class="t" style="left:1672px;top:337.0px">TESS_HM</div>
<div class="a" style="left:1889.5px;top:338.5px;width:0;height:0;border-left:5px solid transparent;border-right:5px solid transparent;border-top:9px solid #f4f4f4"></div>

<div id="winbottom" class="a" style="left:0;top:1032px;width:1920px;height:1px;background:#3e3e3e"></div>
<svg class="a" style="left:0;top:1024px" width="8" height="9"><path d="M0,2 Q1,7 6,8 H0 Z" fill="#8a68b8"/></svg>
<svg class="a" style="left:1912px;top:1024px" width="8" height="9"><path d="M8,2 Q7,7 2,8 H8 Z" fill="#0c0c10"/></svg>
</body></html>
